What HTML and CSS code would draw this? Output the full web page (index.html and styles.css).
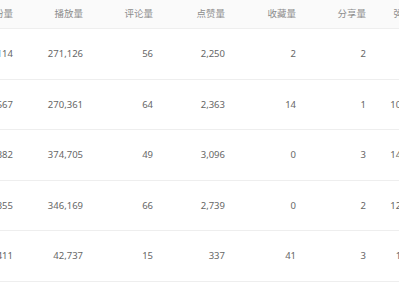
FILE: index.html
```html
<!DOCTYPE html>
<html lang="zh-CN">
<head>
<meta charset="utf-8">
<link rel="stylesheet" href="styles.css">
</head>
<body>
<div class="viewport">
  <table class="stats">
    <colgroup>
      <col class="c0"><col class="c1"><col class="c2"><col class="c3"><col class="c4"><col class="c5"><col class="c6">
    </colgroup>
    <thead>
      <tr><th>涨粉量</th><th>播放量</th><th>评论量</th><th>点赞量</th><th>收藏量</th><th>分享量</th><th>弹幕量</th></tr>
    </thead>
    <tbody>
      <tr><td>1,114</td><td>271,126</td><td>56</td><td>2,250</td><td>2</td><td>2</td><td>960</td></tr>
      <tr><td>1,567</td><td>270,361</td><td>64</td><td>2,363</td><td>14</td><td>1</td><td>10,452</td></tr>
      <tr><td>2,382</td><td>374,705</td><td>49</td><td>3,096</td><td>0</td><td>3</td><td>14,208</td></tr>
      <tr><td>2,355</td><td>346,169</td><td>66</td><td>2,739</td><td>0</td><td>2</td><td>12,871</td></tr>
      <tr><td>1,411</td><td>42,737</td><td>15</td><td>337</td><td>41</td><td>3</td><td>1,936</td></tr>
    </tbody>
  </table>
</div>
</body>
</html>
```

FILE: styles.css
```css
html, body {
  margin: 0;
  padding: 0;
  background: #ffffff;
}
.viewport {
  width: 399px;
  height: 300px;
  overflow: hidden;
}
.stats {
  margin-left: -41px;
  border-collapse: collapse;
  table-layout: fixed;
  width: 479px;
  font-family: "Noto Sans", "Noto Sans CJK SC", sans-serif;
  font-size: 9.5px;
}
.c0 { width: 70px; }
.c1 { width: 70px; }
.c2 { width: 70px; }
.c3 { width: 72px; }
.c4 { width: 71px; }
.c5 { width: 70px; }
.c6 { width: 56px; }
.stats th, .stats td {
  text-align: right;
  padding: 0 16px 0 0;
  white-space: nowrap;
  border-bottom: 1px solid #eeeeee;
}
.stats th {
  height: 25px;
  padding-bottom: 3px;
  background: #fafafa;
  color: #8c8c8c;
  font-weight: normal;
}
.stats td {
  height: 49.5px;
  color: #666666;
}
.stats td:last-child {
  padding-right: 18px;
}
```
